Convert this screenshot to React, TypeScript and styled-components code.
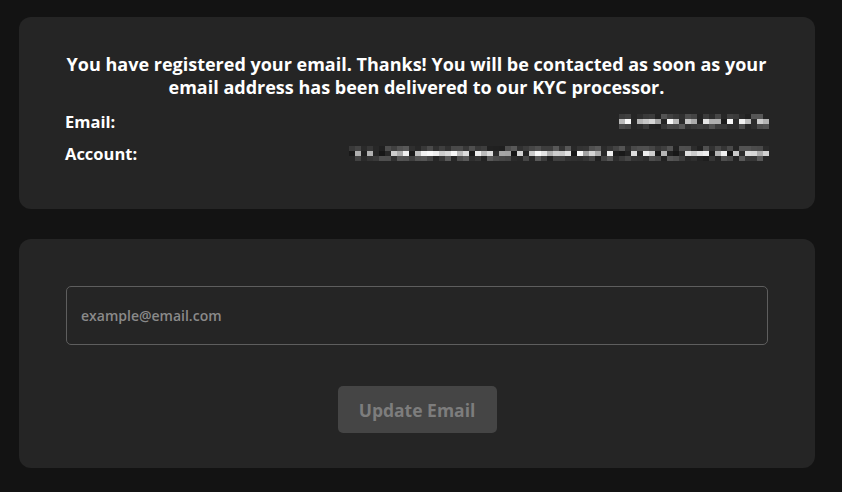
import styled, { createGlobalStyle } from "styled-components";

const GlobalStyle = createGlobalStyle`
  body {
    margin: 0;
    background: #131313;
    font-family: "Open Sans", Lato, sans-serif;
  }
`;

const Page = styled.div`
  display: flex;
  flex-direction: column;
  gap: 30px;
  padding: 17px 27px 24px 19px;
`;

const Card = styled.section`
  background: #252525;
  border-radius: 12px;
  padding: ${(p: { $pad: string }) => p.$pad};
  display: flex;
  flex-direction: column;
`;

const Heading = styled.p`
  margin: 0 -8px 6px -11px;
  color: #ffffff;
  font-size: 18px;
  font-weight: 700;
  line-height: 23px;
  text-align: center;
  white-space: nowrap;
`;

const Row = styled.div`
  display: flex;
  justify-content: space-between;
  align-items: center;
  height: 32px;
  padding-right: 2px;
`;

const Label = styled.span`
  color: #ffffff;
  font-size: 16.5px;
  font-weight: 700;
`;

const Input = styled.input`
  box-sizing: border-box;
  height: 59px;
  width: 100%;
  padding: 0 14px;
  background: transparent;
  border: 1px solid #5e5e5e;
  border-radius: 5px;
  color: #ddd;
  font-family: "Open Sans", sans-serif;
  font-size: 14px;
  font-weight: 600;
  outline: none;
  &::placeholder {
    color: #8a8a8a;
  }
`;

const Button = styled.button`
  align-self: center;
  margin-top: 41px;
  width: 159px;
  height: 47px;
  border: none;
  border-radius: 5px;
  background: #454545;
  color: #7d7d7d;
  font-family: "Open Sans", sans-serif;
  font-size: 17.5px;
  font-weight: 700;
  cursor: not-allowed;
`;

// deterministic grey mosaic standing in for the pixelated (redacted) values
const Mosaic = ({ cols, rows, seed }: { cols: number; rows: number; seed: number }) => {
  let s = seed;
  const rand = () => {
    s = (s * 9301 + 49297) % 233280;
    return s / 233280;
  };
  const size = 6;
  const cells = [];
  for (let r = 0; r < rows; r++) {
    for (let c = 0; c < cols; c++) {
      const v = rand();
      const edge = r === 0 || r === rows - 1;
      const lum = edge ? 30 + v * 60 : v < 0.25 ? 20 + v * 100 : 130 + v * 125;
      const g = Math.round(Math.min(lum, 250));
      cells.push(
        <rect key={`${r}-${c}`} x={c * size} y={r * 5} width={size} height={5} fill={`rgb(${g},${g},${g})`} />
      );
    }
  }
  return (
    <svg width={cols * size} height={rows * 5}>
      {cells}
    </svg>
  );
};

export default function App() {
  return (
    <>
      <GlobalStyle />
      <Page>
        <Card $pad="36px 44px 40px 46px">
          <Heading>
            You have registered your email. Thanks! You will be contacted as soon as your
            <br />
            email address has been delivered to our KYC processor.
          </Heading>
          <Row>
            <Label>Email:</Label>
            <Mosaic cols={25} rows={3} seed={7} />
          </Row>
          <Row>
            <Label>Account:</Label>
            <Mosaic cols={70} rows={3} seed={31} />
          </Row>
        </Card>
        <Card $pad="47px 47px 35px 47px">
          <Input placeholder="example@email.com" />
          <Button disabled>Update Email</Button>
        </Card>
      </Page>
    </>
  );
}
